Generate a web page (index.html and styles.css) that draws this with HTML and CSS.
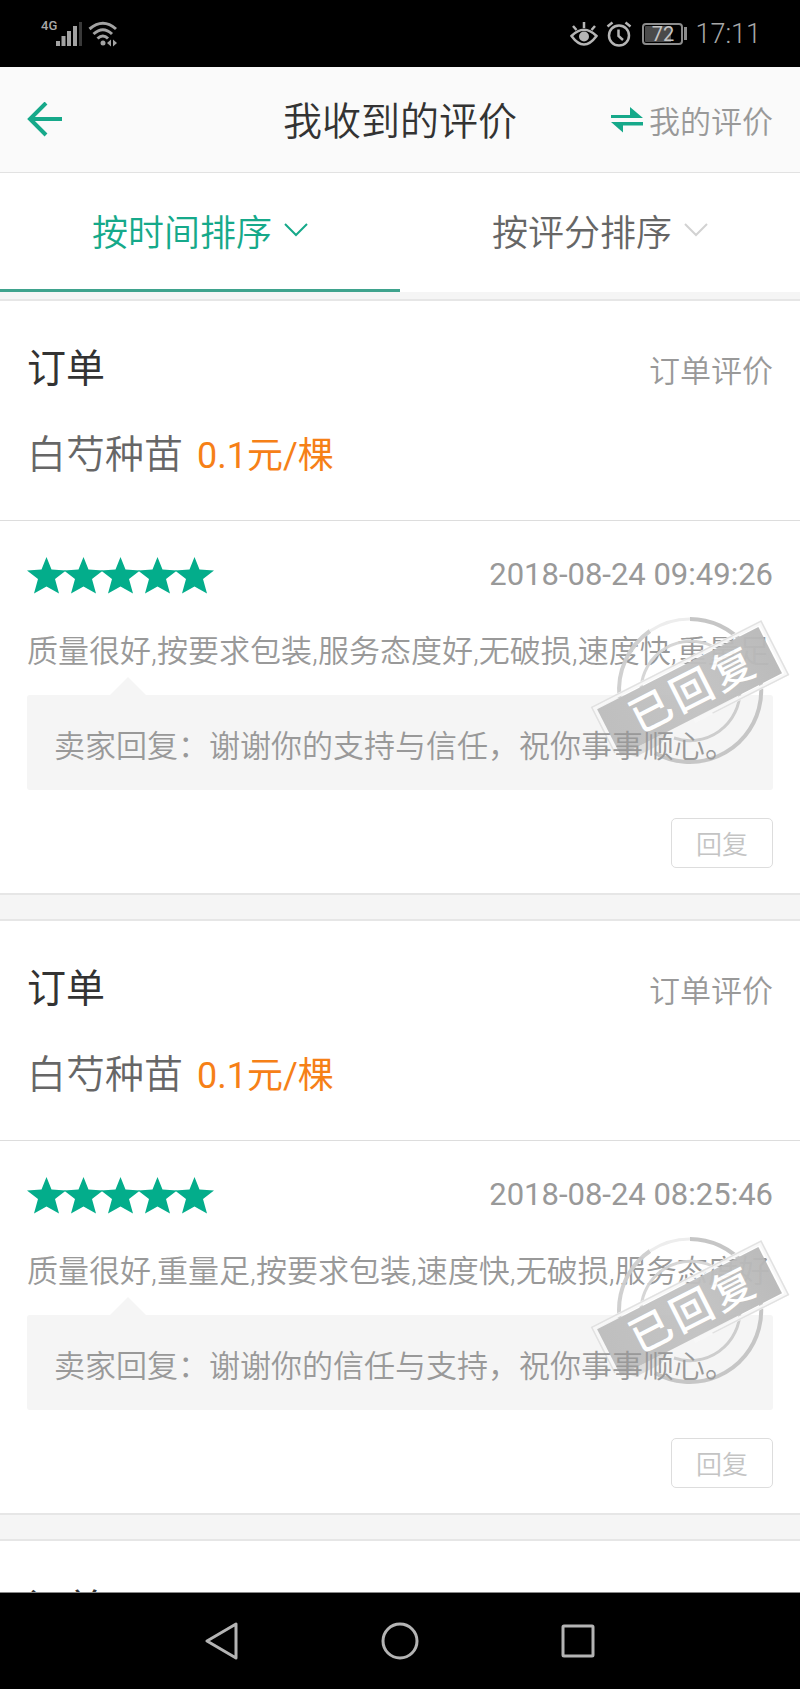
FILE: index.html
```html
<!DOCTYPE html>
<html lang="zh-CN">
<head>
<meta charset="utf-8">
<meta name="viewport" content="width=device-width, initial-scale=1">
<title>我收到的评价</title>
<link rel="stylesheet" href="styles.css">
</head>
<body>
<svg class="defs" aria-hidden="true">
  <defs>
    <symbol id="star" viewBox="0 0 39 37"><path d="M19.500 0 L24.500 12.500 L39 13.500 L28 22 L32 36.500 L19.500 29.500 L7 36.500 L11 22 L0 13.500 L14.500 12.500 Z" fill="#03ad8b"/></symbol>
    <linearGradient id="banner" gradientUnits="userSpaceOnUse" x1="600" y1="0" x2="783" y2="0">
      <stop offset="0" stop-color="#bdbdbd"/>
      <stop offset="0.500" stop-color="#c2c2c2"/>
      <stop offset="1" stop-color="#b8b8b8"/>
    </linearGradient>
    <symbol id="stamp" viewBox="590 614 202 152">
      <path d="M690 619 A71.500 71.500 0 1 1 655 753" fill="none" stroke="#c4c4c4" stroke-width="4"/>
      <path d="M619.500 698 A71.500 71.500 0 0 1 650 631" fill="none" stroke="#cecece" stroke-width="4"/>
      <path d="M650 631 A71.500 71.500 0 0 1 690 619" fill="none" stroke="#ededed" stroke-width="3"/>
      <path d="M641 688 A50 50 0 0 1 712 646" fill="none" stroke="#d4d4d4" stroke-width="3"/>
      <path d="M740 691 A50 50 0 0 1 674 738" fill="none" stroke="#cbcbcb" stroke-width="3"/>
      <g transform="rotate(-27 690 691)">
        <path d="M600 721 H597 V662 H784 V720 H680" fill="none" stroke="#f8f8f8" stroke-width="4"/>
        <path d="M595 712 V661 H785 V721 H700" fill="none" stroke="#e0e0e0" stroke-width="1.500"/>
        <rect x="599" y="665" width="181" height="52" fill="url(#banner)"/>
        <path d="M604 717 L612 725 H640 L652 717 Z" fill="#cccccc" fill-opacity="0.600"/>
        <g class="stamp-text">
          <text x="646" y="706">已</text>
          <text x="692" y="706">回</text>
          <text x="738" y="706">复</text>
        </g>
      </g>
    </symbol>
  </defs>
</svg>

<div class="status">
  <div class="status-group">
    <span class="network">4G</span>
    <svg width="27" height="26" viewBox="0 0 27 26" fill="#a3a3a3"><rect x="0" y="20" width="4" height="5"/><rect x="5.500" y="15" width="4" height="10"/><rect x="11" y="10" width="4" height="15"/><rect x="17" y="5" width="4" height="20"/><rect x="23" y="1" width="3" height="24" fill="#393939"/></svg>
    <svg class="wifi" width="30" height="26" viewBox="0 0 30 26" fill="none" stroke="#a3a3a3" stroke-width="3"><path d="M1.500 8 Q15 -3.500 28 8M5.500 13 Q15 4.500 24 13M9.500 17.500 Q15 12.500 20 17.500"/><circle cx="15" cy="22" r="2.500" fill="#a3a3a3" stroke="none"/><path d="M23 18.500 V25.500 L19 22 ZM25 18.500 V25.500 L29 22 Z" fill="#a3a3a3" stroke="none"/></svg>
  </div>
  <div class="status-group">
    <svg width="28" height="26" viewBox="0 0 28 26" fill="none" stroke="#b5b5b5" stroke-width="2.500"><path d="M1.500 15 Q14 2.500 26.500 15 Q14 32 1.500 15 Z"/><circle cx="14" cy="15.500" r="5" fill="#b5b5b5" stroke="none"/><path d="M14 1 V7M3 5 L6.500 9M25 5 L21.500 9"/></svg>
    <svg class="alarm" width="26" height="26" viewBox="0 0 26 26" fill="none" stroke="#b5b5b5" stroke-width="2.500"><circle cx="13" cy="14.500" r="10"/><path d="M12.500 8.500 V15 L17 19M1.500 5.500 L6.500 1.500M24.500 5.500 L19.500 1.500"/></svg>
    <span class="battery">72</span>
    <time class="clock">17:11</time>
  </div>
</div>

<header class="header">
  <button class="back" type="button" aria-label="返回">
    <svg width="36" height="36" viewBox="0 0 36 36" fill="none" stroke="#16a98a" stroke-width="4"><path d="M35 17 H3M19 1 L3 17 L19 33"/></svg>
  </button>
  <h1 class="title">我收到的评价</h1>
  <a class="mine" href="#">
    <svg width="32" height="26" viewBox="0 0 32 26" fill="#16a98a"><path d="M0 8 H19 V0 L32 11 H0 Z"/><path d="M32 15 H0 L12 25.500 V18.500 H32 Z"/></svg>
    <span>我的评价</span>
  </a>
</header>

<nav class="tabs">
  <button class="tab active" type="button">按时间排序
    <svg width="24" height="14" viewBox="0 0 24 14" fill="none" stroke="currentColor" stroke-width="2"><path d="M1 1 L12 12 L23 1"/></svg>
  </button>
  <button class="tab" type="button">按评分排序
    <svg class="pale" width="24" height="14" viewBox="0 0 24 14" fill="none" stroke="currentColor" stroke-width="2"><path d="M1 1 L12 12 L23 1"/></svg>
  </button>
</nav>

<main class="list">
  <article class="card">
    <section class="order">
      <div class="row"><h2 class="name">订单</h2><span class="kind">订单评价</span></div>
      <div class="goods"><span>白芍种苗</span><span class="price">0.1元/棵</span></div>
    </section>
    <section class="review">
      <div class="rating">
        <div class="stars" role="img" aria-label="5星"><svg><use href="#star"/></svg><svg><use href="#star"/></svg><svg><use href="#star"/></svg><svg><use href="#star"/></svg><svg><use href="#star"/></svg></div>
        <time>2018-08-24 09:49:26</time>
      </div>
      <p class="comment">质量很好,按要求包装,服务态度好,无破损,速度快,重量足</p>
      <div class="answer"><p>卖家回复：谢谢你的支持与信任，祝你事事顺心。</p></div>
      <button class="reply" type="button">回复</button>
      <svg class="stamp" role="img" aria-label="已回复"><use href="#stamp"/></svg>
    </section>
  </article>

  <article class="card">
    <section class="order">
      <div class="row"><h2 class="name">订单</h2><span class="kind">订单评价</span></div>
      <div class="goods"><span>白芍种苗</span><span class="price">0.1元/棵</span></div>
    </section>
    <section class="review">
      <div class="rating">
        <div class="stars" role="img" aria-label="5星"><svg><use href="#star"/></svg><svg><use href="#star"/></svg><svg><use href="#star"/></svg><svg><use href="#star"/></svg><svg><use href="#star"/></svg></div>
        <time>2018-08-24 08:25:46</time>
      </div>
      <p class="comment">质量很好,重量足,按要求包装,速度快,无破损,服务态度好</p>
      <div class="answer"><p>卖家回复：谢谢你的信任与支持，祝你事事顺心。</p></div>
      <button class="reply" type="button">回复</button>
      <svg class="stamp" role="img" aria-label="已回复"><use href="#stamp"/></svg>
    </section>
  </article>

  <article class="card">
    <section class="order">
      <div class="row"><h2 class="name">订单</h2></div>
    </section>
  </article>
</main>

<footer class="system">
  <div class="keys">
    <button type="button" aria-label="后退"><svg width="38" height="38" viewBox="0 0 38 38"><path d="M5 19 L34 2 V36 Z"/></svg></button>
    <button type="button" aria-label="主屏幕"><svg width="38" height="38" viewBox="0 0 38 38"><circle cx="19" cy="19" r="17"/></svg></button>
    <button type="button" aria-label="最近任务"><svg width="38" height="38" viewBox="0 0 38 38"><rect x="3" y="4" width="30" height="30" rx="1"/></svg></button>
  </div>
</footer>
</body>
</html>
```

FILE: styles.css
```css
* {
  box-sizing: border-box;
}

body {
  margin: 0;
  height: 100vh;
  display: flex;
  flex-direction: column;
  overflow: hidden;
  background: #f5f5f5;
  color: #999;
  font-family: Roboto, "Noto Sans CJK SC", sans-serif;
  font-size: 31px;
  font-weight: 350;
}

h1,
h2,
p {
  margin: 0;
  font-weight: inherit;
}

button {
  padding: 0;
  border: 0;
  background: none;
  color: inherit;
  font: inherit;
}

svg {
  display: block;
  flex: none;
}

.defs {
  position: absolute;
  width: 0;
  height: 0;
}

/* Status bar */
.status {
  flex: none;
  display: flex;
  justify-content: space-between;
  height: 67px;
  padding: 0 39px 0 41px;
  background: #000;
  color: #a8a8a8;
}

.status-group {
  display: flex;
  align-items: center;
}

.network {
  align-self: flex-start;
  width: 15px;
  padding-top: 19px;
  font-size: 13px;
  line-height: 14px;
  font-weight: 500;
}

.wifi {
  margin-left: 5px;
}

.alarm {
  margin: 0 10px 0 8px;
}

.battery {
  position: relative;
  width: 41px;
  border: 2px solid #8c8c8c;
  border-radius: 4px;
  background: linear-gradient(90deg, #4a4a4a 72%, #000 72%);
  background-clip: content-box;
  padding: 1px;
  color: #c4c4c4;
  font-size: 20px;
  line-height: 16px;
  font-weight: 400;
  text-align: center;
}

.battery::after {
  content: "";
  position: absolute;
  top: 2px;
  right: -6px;
  width: 3px;
  height: 13px;
  background: #8c8c8c;
}

.clock {
  margin-left: 12px;
  font-size: 27px;
}

/* Title bar */
.header {
  flex: none;
  display: grid;
  grid-template-columns: 1fr auto 1fr;
  align-items: center;
  height: 106px;
  padding: 0 27px;
  border-bottom: 1px solid #e2e2e2;
  background: #fafafa;
}

.back {
  justify-self: start;
}

.title {
  padding-bottom: 4px;
  color: #333;
  font-size: 39px;
}

.mine {
  justify-self: end;
  display: flex;
  align-items: center;
  gap: 6px;
  color: #999;
  text-decoration: none;
}

/* Sort tabs */
.tabs {
  flex: none;
  display: flex;
  height: 119px;
  background: #fff;
}

.tab {
  flex: 1;
  display: flex;
  align-items: center;
  justify-content: center;
  gap: 12px;
  padding-bottom: 2px;
  border-bottom: 3px solid transparent;
  color: #666;
  font-size: 36px;
}

.tab.active {
  border-color: #3fa38d;
  color: #16a98a;
}

.pale {
  color: #d2d2d2;
}

/* Review cards */
.list {
  flex: 1;
  min-height: 0;
  display: flex;
  flex-direction: column;
  gap: 24px;
  padding-top: 7px;
  overflow: hidden;
}

.card {
  flex: none;
  border-top: 2px solid #e6e6e6;
  border-bottom: 2px solid #e6e6e6;
  background: #fff;
}

.order {
  display: flex;
  flex-direction: column;
  gap: 26px;
  padding: 38px 27px 35px;
  line-height: 60px;
}

.row {
  display: flex;
  align-items: baseline;
  justify-content: space-between;
}

.name {
  color: #333;
  font-size: 39px;
  font-weight: 400;
}

.kind,
.price {
  line-height: 40px;
}

.goods {
  display: flex;
  align-items: baseline;
  gap: 14px;
  color: #666;
  font-size: 39px;
}

.price {
  color: #f68017;
  font-size: 36px;
  font-weight: 400;
}

.review {
  position: relative;
  display: flex;
  flex-direction: column;
  padding: 34px 27px 25px;
  border-top: 1px solid #ddd;
}

.rating {
  display: flex;
  align-items: center;
  justify-content: space-between;
  font-weight: 400;
  line-height: 40px;
}

.stars {
  display: flex;
}

.stars svg {
  width: 39px;
  height: 37px;
  margin-right: -2px;
}

.comment {
  margin-top: 34px;
  line-height: 46px;
  white-space: nowrap;
  overflow: hidden;
}

.answer {
  position: relative;
  margin-top: 20px;
  padding: 29px 27px 20px;
  border-radius: 3px;
  background: #f5f5f5;
  line-height: 46px;
}

.answer::before {
  content: "";
  position: absolute;
  left: 83px;
  bottom: 100%;
  border: 18px solid transparent;
  border-top-width: 0;
  border-bottom-color: #f5f5f5;
}

.answer p {
  position: relative;
  z-index: 2;
}

.reply {
  align-self: flex-end;
  margin-top: 28px;
  padding: 4px 24px 0;
  border: 1px solid #ddd;
  border-radius: 5px;
  color: #c4c4c4;
  font-size: 26px;
  line-height: 44px;
}

.stamp {
  position: absolute;
  z-index: 1;
  top: 93px;
  right: 8px;
  width: 202px;
  height: 152px;
  opacity: 0.95;
}

.stamp-text {
  fill: #fff;
  font-size: 42px;
  font-weight: 500;
  text-anchor: middle;
}

/* System navigation */
.system {
  flex: none;
  display: flex;
  align-items: center;
  justify-content: center;
  height: 97px;
  border-top: 1px solid #888;
  background: #000;
}

.keys {
  flex: 0 0 67%;
  display: grid;
  grid-template-columns: repeat(3, 1fr);
  justify-items: center;
}

.keys svg {
  fill: none;
  stroke: #b4b4b4;
  stroke-width: 3;
  stroke-linejoin: round;
}
```
